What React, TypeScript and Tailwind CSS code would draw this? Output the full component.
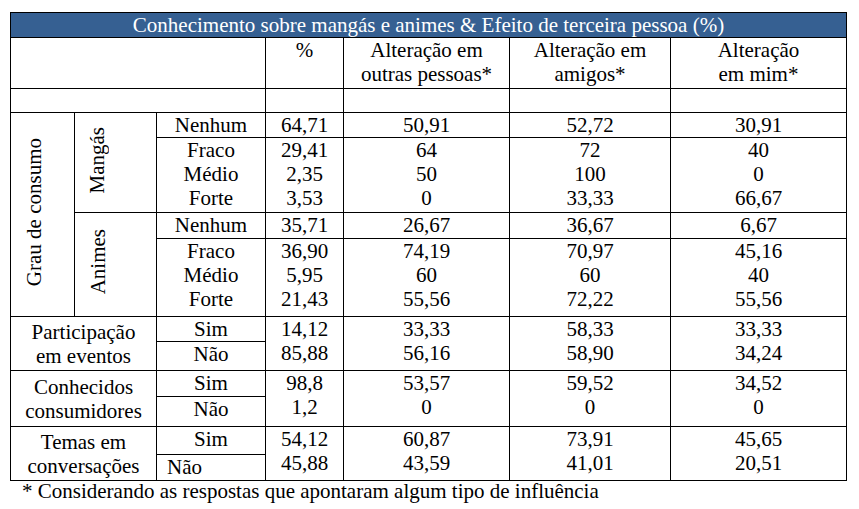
import React from 'react';

/** One value cell: a stack of lines, centred in its column. */
const Cell: React.FC<{ lines: string[]; rowSpan?: number; colSpan?: number; className?: string }> = ({
  lines,
  rowSpan,
  colSpan,
  className = 'align-top',
}) => (
  <td rowSpan={rowSpan} colSpan={colSpan} className={`border border-black text-center p-0 ${className}`}>
    {lines.map((l, i) => (
      <div key={i}>{l}</div>
    ))}
  </td>
);

/** Rotated label, reads bottom to top (sits a little left of centre, as in the source). */
const VerticalLabel: React.FC<{ text: string; rowSpan: number; pad: string }> = ({ text, rowSpan, pad }) => (
  <td rowSpan={rowSpan} className={`border border-black text-left align-middle p-0 ${pad}`}>
    <div className="inline-block [writing-mode:vertical-rl] rotate-180 whitespace-nowrap">{text}</div>
  </td>
);

// values per block: [%, outras pessoas, amigos, mim]
const mangas = {
  nenhum: ['64,71', '50,91', '52,72', '30,91'],
  rest: [
    ['29,41', '2,35', '3,53'],
    ['64', '50', '0'],
    ['72', '100', '33,33'],
    ['40', '0', '66,67'],
  ],
};

const animes = {
  nenhum: ['35,71', '26,67', '36,67', '6,67'],
  rest: [
    ['36,90', '5,95', '21,43'],
    ['74,19', '60', '55,56'],
    ['70,97', '60', '72,22'],
    ['45,16', '40', '55,56'],
  ],
};

const yesNoBlocks = [
  {
    label: ['Participação', 'em eventos'],
    values: [
      ['14,12', '85,88'],
      ['33,33', '56,16'],
      ['58,33', '58,90'],
      ['33,33', '34,24'],
    ],
    heights: ['h-[25px]', 'h-[29px]'],
    naoLeft: false,
  },
  {
    label: ['Conhecidos', 'consumidores'],
    values: [
      ['98,8', '1,2'],
      ['53,57', '0'],
      ['59,52', '0'],
      ['34,52', '0'],
    ],
    heights: ['h-[26px]', 'h-[30px]'],
    naoLeft: false,
  },
  {
    label: ['Temas em', 'conversações'],
    values: [
      ['54,12', '45,88'],
      ['60,87', '43,59'],
      ['73,91', '41,01'],
      ['45,65', '20,51'],
    ],
    heights: ['h-[28px]', 'h-[26px]'],
    naoLeft: true,
  },
];

export default function App() {
  return (
    <div className="bg-white w-[859px] h-[509px] pt-3 pl-2.5 text-black font-['Liberation_Serif'] text-[21px] leading-[24px]">
      <table className="table-fixed border-collapse w-[836px] font-['Liberation_Serif']">
        <colgroup>
          <col className="w-[64px]" />
          <col className="w-[82px]" />
          <col className="w-[109px]" />
          <col className="w-[78px]" />
          <col className="w-[166px]" />
          <col className="w-[161px]" />
          <col className="w-[176px]" />
        </colgroup>
        <tbody>
          {/* Title */}
          <tr className="h-[25px]">
            <td colSpan={7} className="border border-black bg-[#366092] text-white text-center align-top p-0">
              Conhecimento sobre mangás e animes &amp; Efeito de terceira pessoa (%)
            </td>
          </tr>

          {/* Column headers */}
          <tr className="h-[51px]">
            <td colSpan={3} className="border border-black p-0" />
            <Cell lines={['%']} />
            <Cell lines={['Alteração em', 'outras pessoas*']} />
            <Cell lines={['Alteração em', 'amigos*']} />
            <Cell lines={['Alteração', 'em mim*']} />
          </tr>
          <tr className="h-[24px]">
            <td colSpan={3} className="border border-black p-0" />
            <td className="border border-black p-0" />
            <td className="border border-black p-0" />
            <td className="border border-black p-0" />
            <td className="border border-black p-0" />
          </tr>

          {/* Mangás */}
          <tr className="h-[25px]">
            <VerticalLabel text="Grau de consumo" rowSpan={4} pad="pl-[11px]" />
            <VerticalLabel text="Mangás" rowSpan={2} pad="pl-[10px]" />
            <Cell lines={['Nenhum']} />
            {mangas.nenhum.map((v, i) => (
              <Cell key={i} lines={[v]} />
            ))}
          </tr>
          <tr className="h-[75px]">
            <Cell lines={['Fraco', 'Médio', 'Forte']} />
            {mangas.rest.map((col, i) => (
              <Cell key={i} lines={col} />
            ))}
          </tr>

          {/* Animes */}
          <tr className="h-[26px]">
            <VerticalLabel text="Animes" rowSpan={2} pad="pl-[11px]" />
            <Cell lines={['Nenhum']} />
            {animes.nenhum.map((v, i) => (
              <Cell key={i} lines={[v]} />
            ))}
          </tr>
          <tr className="h-[78px]">
            <Cell lines={['Fraco', 'Médio', 'Forte']} />
            {animes.rest.map((col, i) => (
              <Cell key={i} lines={col} />
            ))}
          </tr>

          {/* Sim / Não blocks */}
          {yesNoBlocks.map((b) => (
            <React.Fragment key={b.label[0]}>
              <tr className={b.heights[0]}>
                <Cell rowSpan={2} colSpan={2} lines={b.label} className="align-middle" />
                <Cell lines={['Sim']} />
                {b.values.map((col, i) => (
                  <Cell key={i} rowSpan={2} lines={col} />
                ))}
              </tr>
              <tr className={b.heights[1]}>
                <td className={`border border-black align-top p-0 ${b.naoLeft ? 'text-left pl-2.5' : 'text-center'}`}>
                  Não
                </td>
              </tr>
            </React.Fragment>
          ))}
        </tbody>
      </table>
      <p className="pl-3 leading-[20px] font-['Liberation_Serif']">* Considerando as respostas que apontaram algum tipo de influência</p>
    </div>
  );
}
